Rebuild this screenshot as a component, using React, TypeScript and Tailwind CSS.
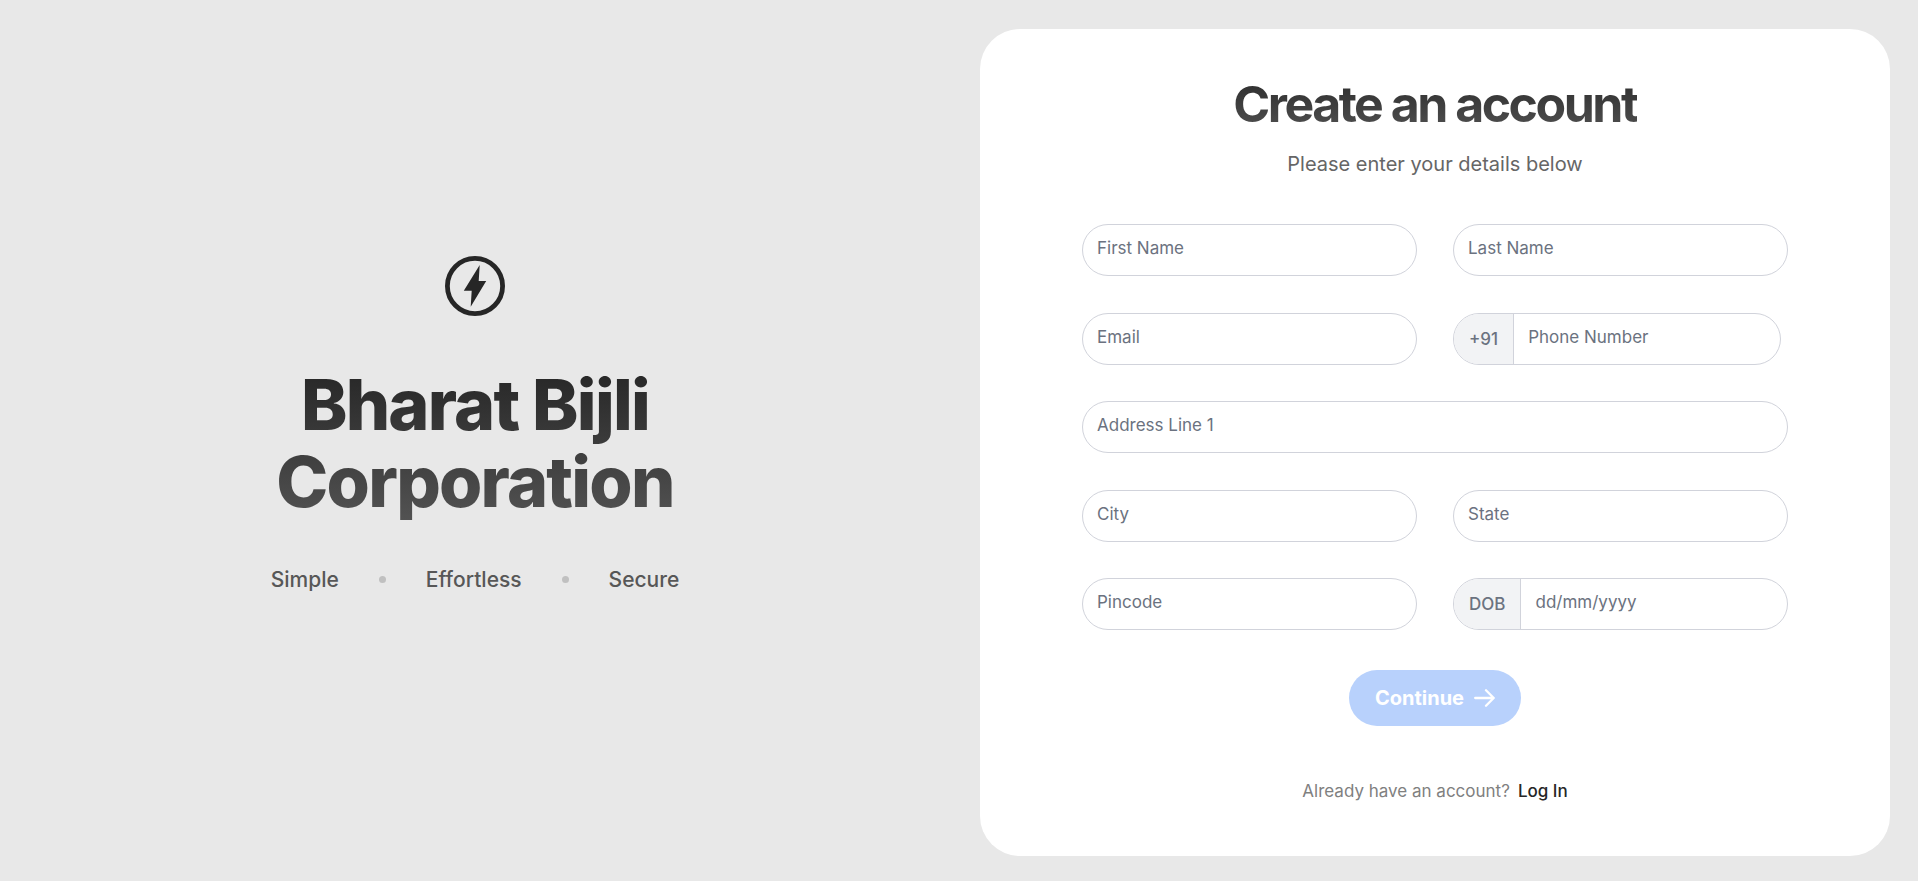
import { useId } from "react";

type FieldProps = {
  label: string;
  type?: string;
  prefix?: string;
  className?: string;
};

function Field({ label, type = "text", prefix, className = "" }: FieldProps) {
  const id = useId();
  return (
    <div
      className={`flex h-[52px] min-w-0 overflow-hidden rounded-full border border-[#d1d3db] bg-white text-[17px] leading-6 text-[#6b7280] ${className}`}
    >
      {prefix && (
        <label
          htmlFor={id}
          className="flex shrink-0 items-center border-r border-[#d1d3db] bg-[#f2f3f5] px-[15px] font-medium"
        >
          {prefix}
        </label>
      )}
      <input
        id={id}
        type={type}
        placeholder={label}
        aria-label={label}
        className="min-w-0 flex-1 bg-transparent px-[14px] pb-1 outline-none placeholder:text-[#6b7280]"
      />
    </div>
  );
}

function BoltLogo() {
  return (
    <svg width="60" height="60" viewBox="0 0 60 60" aria-hidden="true">
      <circle cx="30" cy="30" r="27.6" fill="none" stroke="#262626" strokeWidth="4.8" />
      <path d="M34.7 9 18.8 34.7h7.9L25.7 50.7 41.2 25h-7.5z" fill="#262626" />
    </svg>
  );
}

function ArrowRight() {
  return (
    <svg
      width="22"
      height="20"
      viewBox="0 0 22 20"
      fill="none"
      stroke="currentColor"
      strokeWidth="2.3"
      strokeLinecap="round"
      strokeLinejoin="round"
      aria-hidden="true"
    >
      <path d="M2.2 10h18.5M13 2.3l7.7 7.7-7.7 7.7" />
    </svg>
  );
}

export default function App() {
  return (
    <div className="flex min-h-screen bg-[#e8e8e8] font-['Inter',sans-serif]">
      <section className="flex w-[950px] min-w-0 shrink flex-col items-center justify-center pb-8">
        <BoltLogo />
        <h1 className="mt-[50px] bg-linear-to-b from-[#262626] to-[#525252] bg-clip-text text-center text-[70px] leading-[77px] font-extrabold tracking-tight text-transparent">
          Bharat Bijli
          <br />
          Corporation
        </h1>
        <ul className="mt-[46px] flex items-center gap-10 text-[21px] leading-7 font-medium text-[#575757]">
          <li>Simple</li>
          <li aria-hidden="true" className="size-[7px] rounded-full bg-[#c0c0c0]" />
          <li>Effortless</li>
          <li aria-hidden="true" className="size-[7px] rounded-full bg-[#c0c0c0]" />
          <li>Secure</li>
        </ul>
      </section>

      <main className="mt-[29px] mr-7 mb-[25px] ml-[30px] flex min-w-0 flex-1 flex-col items-center rounded-[40px] bg-white px-[102px] pt-[45px]">
        <h2 className="bg-linear-to-b from-[#2b2b2b] to-[#525252] bg-clip-text text-[50px] leading-[60px] font-bold tracking-tighter text-transparent">
          Create an account
        </h2>
        <p className="mt-4 text-xl leading-7 text-[#666666]">Please enter your details below</p>

        <form className="mt-[46px] flex w-full flex-col items-center">
          <div className="grid min-h-[406px] w-full grid-cols-2 content-between gap-x-9">
            <Field label="First Name" />
            <Field label="Last Name" />
            <Field label="Email" type="email" />
            <Field label="Phone Number" type="tel" prefix="+91" className="mr-[7px]" />
            <Field label="Address Line 1" className="col-span-2" />
            <Field label="City" />
            <Field label="State" />
            <Field label="Pincode" />
            <Field label="dd/mm/yyyy" prefix="DOB" />
          </div>
          <button
            type="submit"
            disabled
            className="mt-10 flex h-14 items-center gap-[9px] rounded-full bg-[#b8d1fc] px-[26px] text-xl leading-7 font-bold text-white"
          >
            Continue
            <ArrowRight />
          </button>
        </form>

        <p className="mt-[53px] text-[17px] leading-6 text-[#808080]">
          Already have an account?
          <a href="#login" className="ml-2 font-medium text-[#262626]">
            Log In
          </a>
        </p>
      </main>
    </div>
  );
}
